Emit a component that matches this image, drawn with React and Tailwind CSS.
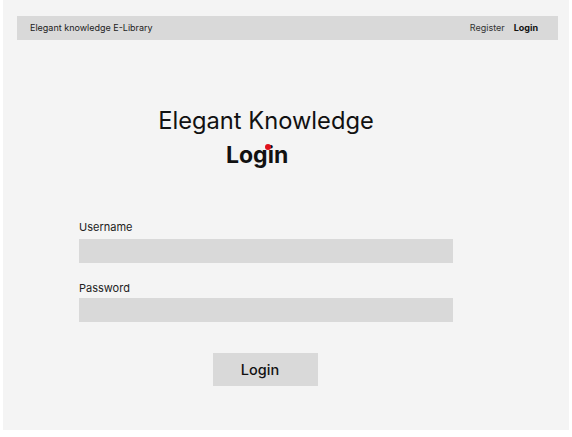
export default function App() {
  return (
    <div className="min-h-[437px] bg-white font-['Inter',sans-serif] text-[#111]">
      <div className="ml-[3px] h-[430px] w-[566px] bg-[#f4f4f4] pl-[14px] pr-[11px] pt-4">
        <header className="flex h-6 items-center justify-between bg-[#d9d9d9] pl-[13px] pr-[20px] text-[9px]">
          <span className="text-[#222]">Elegant knowledge E-Library</span>
          <nav className="flex items-center gap-[9px]">
            <span className="text-[#333]">Register</span>
            <span className="font-bold">Login</span>
          </nav>
        </header>

        <main className="ml-[62px] w-[374px]">
          <div className="mt-[68px] flex flex-col items-center">
            <h1 className="text-[23.7px] leading-[26px] font-normal">Elegant Knowledge</h1>
            <div className="relative mt-[9px] self-start ml-[147px]">
              <h2 className="text-[23px] leading-[24px] font-bold">Login</h2>
              <span className="absolute left-[39px] top-[1px] h-[6px] w-[6px] rounded-full bg-[#e0111b]" />
            </div>
          </div>

          <form className="mt-[53px] flex flex-col">
            <label className="text-[11px] leading-[14px] text-[#222]">Username</label>
            <div className="mt-[5px] h-6 bg-[#d9d9d9]" />
            <label className="mt-[18px] text-[11px] leading-[14px] text-[#222]">Password</label>
            <div className="mt-[3px] h-6 bg-[#d9d9d9]" />
            <div className="mt-[31px] flex justify-center">
              <button
                type="button"
                className="h-[33px] w-[105px] -translate-x-px bg-[#d9d9d9] pr-[10px] text-[14.5px] font-medium"
              >
                Login
              </button>
            </div>
          </form>
        </main>
      </div>
    </div>
  );
}
